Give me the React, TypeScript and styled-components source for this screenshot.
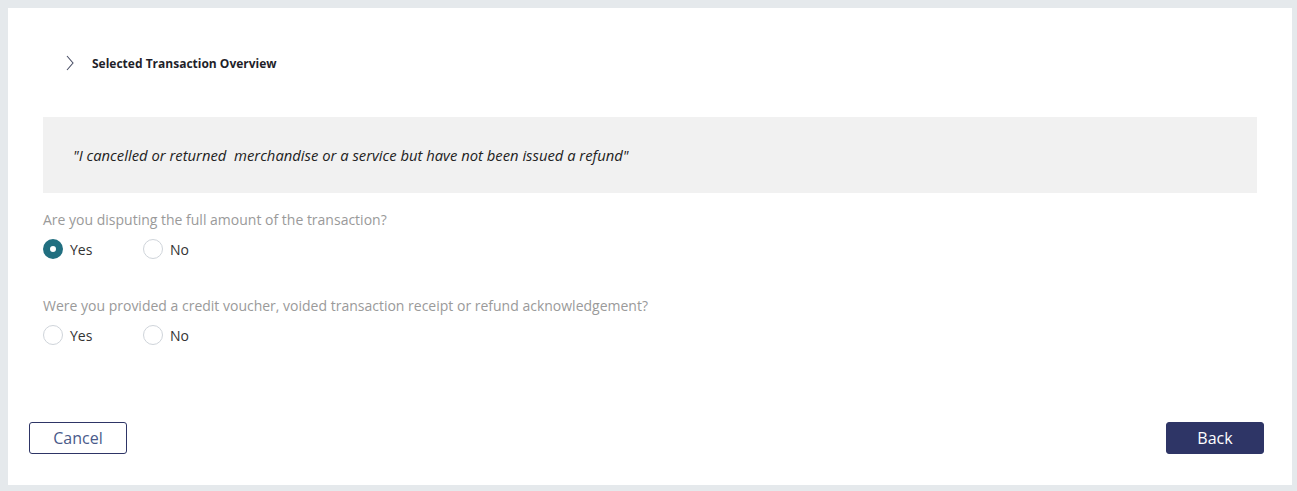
import styled, { createGlobalStyle } from 'styled-components';

const NAVY = '#2e3566';
const TEAL = '#216f80';

const GlobalStyle = createGlobalStyle`
  html, body {
    margin: 0;
    padding: 0;
    background: #e5e9ec;
  }
  body {
    font-family: 'Open Sans', 'Noto Sans', sans-serif;
  }
`;

type Question = {
  text: string;
  selected: string | null;
};

const QUESTIONS: Question[] = [
  { text: 'Are you disputing the full amount of the transaction?', selected: 'Yes' },
  {
    text: 'Were you provided a credit voucher, voided transaction receipt or refund acknowledgement?',
    selected: null,
  },
];

export default function App(): JSX.Element {
  return (
    <>
      <GlobalStyle />
      <Page>
        <Card>
          <Overview>
            <svg width='8' height='16' viewBox='0 0 8 16'>
              <path d='M1 1 L7 8 L1 15' fill='none' stroke='#4a4f66' strokeWidth='1.1' />
            </svg>
            <OverviewTitle>Selected Transaction Overview</OverviewTitle>
          </Overview>

          <Quote>
            "I cancelled or returned&nbsp; merchandise or a service but have not been issued a refund"
          </Quote>

          {QUESTIONS.map((q) => (
            <QuestionBlock key={q.text}>
              <QuestionText>{q.text}</QuestionText>
              <Options>
                {['Yes', 'No'].map((opt) => (
                  <Option key={opt}>
                    <Radio $checked={q.selected === opt} />
                    <OptionLabel>{opt}</OptionLabel>
                  </Option>
                ))}
              </Options>
            </QuestionBlock>
          ))}

          <Footer>
            <CancelButton>Cancel</CancelButton>
            <BackButton>Back</BackButton>
          </Footer>
        </Card>
      </Page>
    </>
  );
}

const Page = styled.div`
  padding: 8px 5px 6px 8px;
  height: 491px;
  box-sizing: border-box;
  display: flex;
`;

const Card = styled.div`
  flex: 1;
  background: #ffffff;
  display: flex;
  flex-direction: column;
  padding: 0 35px 0 35px;
`;

const Overview = styled.div`
  display: flex;
  align-items: center;
  gap: 18px;
  padding: 48px 0 0 23px;
  height: 14px;
`;

const OverviewTitle = styled.span`
  font-size: 12px;
  font-weight: 700;
  color: #1f1f2a;
`;

const Quote = styled.div`
  margin-top: 47px;
  height: 76px;
  background: #f1f1f1;
  display: flex;
  align-items: center;
  padding-left: 30px;
  font-size: 14.8px;
  font-style: italic;
  color: #222;
`;

const QuestionBlock = styled.div`
  display: flex;
  flex-direction: column;
  margin-top: 18px;

  & + & {
    margin-top: 38px;
  }
`;

const QuestionText = styled.div`
  font-size: 14px;
  color: #9a9a9a;
  line-height: 18px;
`;

const Options = styled.div`
  display: flex;
  margin-top: 10px;
`;

const Option = styled.label`
  display: flex;
  align-items: center;
  width: 100px;
  gap: 7px;
`;

const Radio = styled.span<{ $checked: boolean }>`
  width: 20px;
  height: 20px;
  border-radius: 50%;
  box-sizing: border-box;
  background: #ffffff;
  border: ${(p) => (p.$checked ? `7px solid ${TEAL}` : '1px solid #cfd4da')};
`;

const OptionLabel = styled.span`
  font-size: 14px;
  color: #333;
`;

const Footer = styled.div`
  margin-top: auto;
  margin-bottom: 31px;
  margin-left: -14px;
  margin-right: -7px;
  display: flex;
  justify-content: space-between;
`;

const ButtonBase = styled.button`
  width: 98px;
  height: 32px;
  border-radius: 3px;
  font-family: 'Open Sans', 'Noto Sans', sans-serif;
  font-size: 16px;
  cursor: pointer;
`;

const CancelButton = styled(ButtonBase)`
  background: #ffffff;
  border: 1px solid ${NAVY};
  color: #4a5a8a;
`;

const BackButton = styled(ButtonBase)`
  background: ${NAVY};
  border: 1px solid ${NAVY};
  color: #ffffff;
`;
